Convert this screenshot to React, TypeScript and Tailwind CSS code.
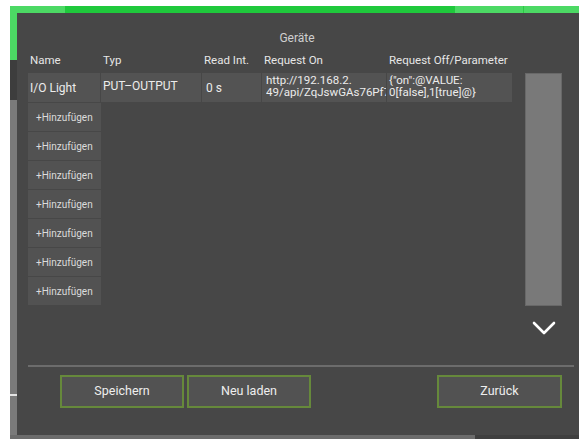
const columns = [
  { label: 'Name', w: 'w-[73px]' },
  { label: 'Typ', w: 'w-[101px]' },
  { label: 'Read Int.', w: 'w-[60px]' },
  { label: 'Request On', w: 'w-[125px]' },
  { label: 'Request Off/Parameter', w: 'w-[126px]' },
];

const App = () => {
  const addRows = Array.from({ length: 7 });

  return (
    <div
      className="w-[579px] h-[439px] bg-white pl-[10px] pt-[6px] overflow-hidden"
      style={{ fontFamily: 'Roboto, "Liberation Sans", sans-serif' }}
    >
      <div className="flex flex-col h-full">
        <div className="flex flex-1 min-h-0">
          {/* linke Leiste der Hauptansicht */}
          <div className="w-[7px] flex flex-col">
            <div className="h-[54px] bg-[#4cd964]" />
            <div className="h-[40px] bg-[#3d3d3d]" />
            <div className="flex-1 bg-[#7a7a7a] flex flex-col">
              <div className="h-[294px]" />
              <div className="h-[2px] bg-[#e4e4e4]" />
            </div>
          </div>

          <div className="flex-1 flex flex-col min-w-0">
            {/* Kopfleiste */}
            <div className="h-[7px] flex">
              <div className="w-[48px] bg-[#4cd964]" />
              <div className="w-[390px] bg-[#1fc93c]" />
              <div className="w-[68px] bg-[#4cd964]" />
              <div className="w-px bg-[#2ccb45]" />
              <div className="flex-1 bg-[#4cd964]" />
            </div>

            {/* Dialog */}
            <div className="flex-1 bg-[#474747] flex flex-col pl-[11px] pr-[5px]">
              <div className="h-[40px] pt-[16px] text-center text-[12px] text-[#cfcfcf] pr-[8px]">
                Geräte
              </div>

              <div className="flex gap-[12px]">
                <div className="flex flex-col">
                  {/* Spaltenköpfe */}
                  <div className="flex h-[20px] items-start text-[11.5px] leading-[14px] text-[#e6e6e6]">
                    {columns.map((c) => (
                      <div key={c.label} className={`${c.w} pl-[2px] whitespace-nowrap`}>
                        {c.label}
                      </div>
                    ))}
                  </div>

                  {/* Datenzeile */}
                  <div className="flex h-[29px] gap-px text-[#ececec]">
                    <div className="w-[72px] bg-[#535353] flex items-center pl-[2px] text-[12px]">I/O Light</div>
                    <div className="w-[100px] bg-[#535353] pt-[4px] pl-[2px] text-[12px]">PUT–OUTPUT</div>
                    <div className="w-[59px] bg-[#535353] flex items-center pl-[4px] text-[12px]">0 s</div>
                    <div className="w-[124px] bg-[#535353] pl-[4px] pt-[1px] text-[11.5px] leading-[12px] overflow-hidden">
                      <div className="w-[120px] overflow-hidden whitespace-nowrap">http://192.168.2.</div>
                      <div className="w-[120px] overflow-hidden whitespace-nowrap">49/api/ZqJswGAs76Pf7</div>
                    </div>
                    <div className="w-[125px] bg-[#535353] pl-[2px] pt-[1px] text-[11.5px] leading-[12px] whitespace-nowrap">
                      <div>{'{"on":@VALUE:'}</div>
                      <div>{'0[false],1[true]@}'}</div>
                    </div>
                  </div>

                  {/* Hinzufügen */}
                  <div className="flex flex-col gap-px mt-px">
                    {addRows.map((_, i) => (
                      <div
                        key={i}
                        className="w-[73px] h-[28px] bg-[#525252] flex items-center pl-[8px] text-[10px] text-[#dcdcdc]"
                      >
                        +Hinzufügen
                      </div>
                    ))}
                  </div>
                </div>

                {/* Scrollbereich */}
                <div className="flex flex-col items-center pt-[20px]">
                  <div className="w-[37px] h-[233px] bg-[#797979] border border-[#686868]" />
                  <svg className="mt-[15px]" width="24" height="15" viewBox="0 0 24 15" fill="none">
                    <polyline points="2,2 12,12 22,2" stroke="white" strokeWidth="2.6" strokeLinecap="round" strokeLinejoin="round" />
                  </svg>
                </div>
              </div>

              <div className="flex-1" />

              <div className="h-[2px] bg-[#6c6c6c]" />

              <div className="flex pt-[8px] pb-[27px] pl-[32px] pr-[12px] text-[12.5px] text-[#eeeeee]">
                <button className="w-[124px] h-[33px] bg-[#525252] border-2 border-[#66893b]">Speichern</button>
                <button className="ml-[3px] w-[124px] h-[33px] bg-[#525252] border-2 border-[#66893b]">Neu laden</button>
                <div className="flex-1" />
                <button className="w-[125px] h-[33px] bg-[#525252] border-2 border-[#66893b]">Zurück</button>
              </div>
            </div>
          </div>
        </div>

        {/* untere Kante */}
        <div className="h-[4px] flex">
          <div className="w-[465px] bg-[#6c6c6c]" />
          <div className="flex-1 bg-[#3f3f3f]" />
        </div>
      </div>
    </div>
  );
};

export default App;
